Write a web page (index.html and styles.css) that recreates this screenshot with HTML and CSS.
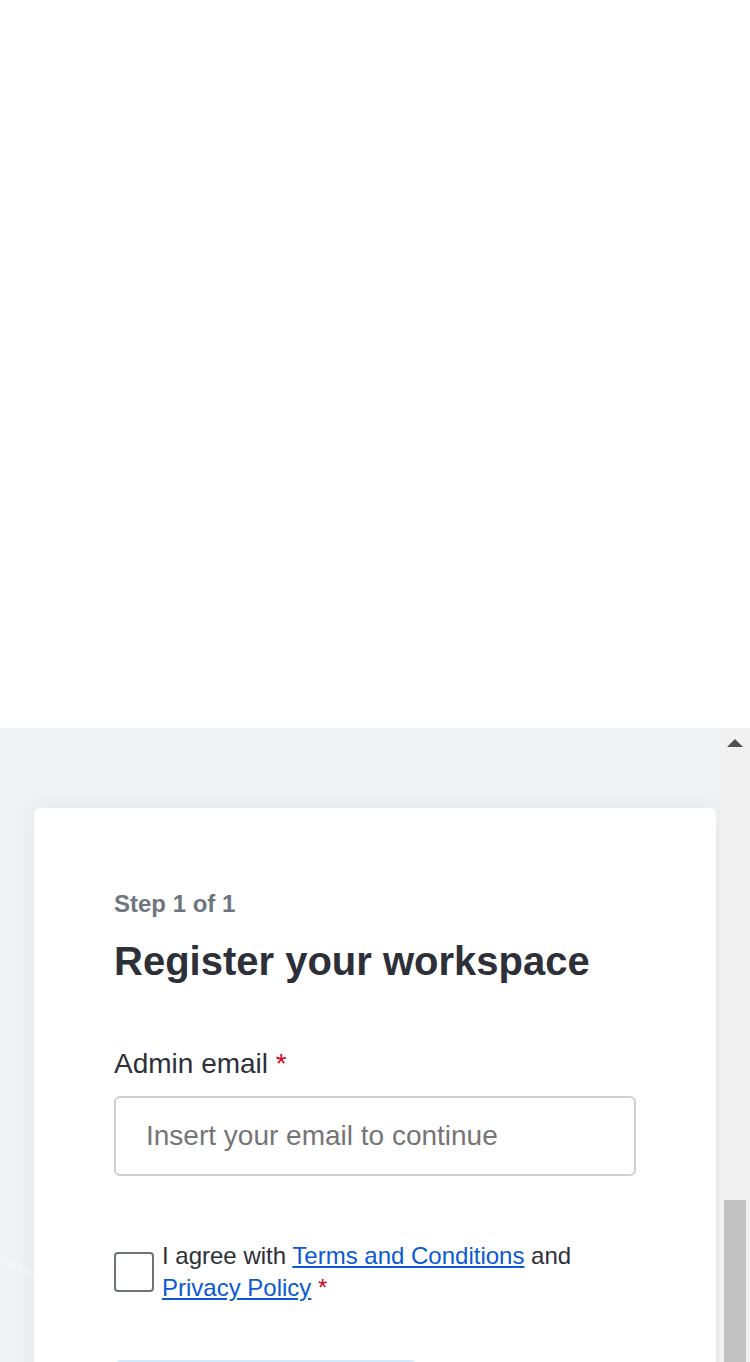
FILE: index.html
```html
<!DOCTYPE html>
<html lang="en">
<head>
<meta charset="utf-8">
<title>Register your workspace</title>
<link rel="stylesheet" href="styles.css">
</head>
<body>
<div class="blank"></div>
<div class="frame">
  <div class="deco"></div>
  <main class="card">
    <p class="step">Step 1 of 1</p>
    <h1 class="title">Register your workspace</h1>
    <form class="form">
      <label class="label" for="email">Admin email <span class="req">*</span></label>
      <input class="input" id="email" type="email" placeholder="Insert your email to continue">
      <div class="agree">
        <span class="checkbox"></span>
        <span class="agree-text">I agree with <a href="#">Terms and Conditions</a> and <a href="#">Privacy Policy</a> <span class="req">*</span></span>
      </div>
      <button class="submit" type="button" disabled>Continue</button>
    </form>
  </main>
  <div class="scrollbar">
    <span class="arrow"></span>
    <span class="thumb"></span>
  </div>
</div>
</body>
</html>
```
FILE: styles.css
```css
html, body {
  margin: 0;
  padding: 0;
  background: #ffffff;
}
body {
  font-family: "Liberation Sans", Arial, sans-serif;
  color: #2e3039;
}
.blank {
  height: 728px;
  background: #ffffff;
}
.frame {
  position: relative;
  height: 634px;
  overflow: hidden;
  background: #f1f2f4;
}
.deco {
  position: absolute;
  left: -60px;
  top: 500px;
  width: 140px;
  height: 8px;
  background: #f4f5f7;
  transform: rotate(24deg);
  transform-origin: left top;
}
.card {
  position: relative;
  margin: 80px 34px 0;
  padding: 80px;
  background: #ffffff;
  border-radius: 6px;
  box-shadow: 0 0 22px rgba(40, 44, 60, 0.07);
}
.step {
  margin: 0;
  font-size: 24px;
  line-height: 32px;
  font-weight: 700;
  color: #6f7580;
}
.title {
  margin: 16px 0 0;
  font-size: 40px;
  line-height: 50px;
  font-weight: 700;
  color: #2e3039;
}
.form {
  display: flex;
  flex-direction: column;
  align-items: flex-start;
  margin-top: 58px;
}
.label {
  font-size: 28px;
  line-height: 40px;
  color: #2e3039;
}
.req {
  color: #d9001b;
}
.input {
  box-sizing: border-box;
  width: 100%;
  height: 80px;
  margin-top: 12px;
  padding: 0 30px;
  border: 2px solid #cdd0d5;
  border-radius: 6px;
  font-family: "Liberation Sans", Arial, sans-serif;
  font-size: 28px;
  color: #2e3039;
  background: #ffffff;
}
.input::placeholder {
  color: #757575;
}
.agree {
  display: flex;
  align-items: center;
  gap: 8px;
  margin-top: 64px;
}
.checkbox {
  flex: none;
  box-sizing: border-box;
  width: 40px;
  height: 40px;
  border: 2px solid #6e737b;
  border-radius: 4px;
  background: #ffffff;
}
.agree-text {
  font-size: 24px;
  line-height: 32px;
  color: #2e3039;
}
.agree-text a {
  color: #0b5ad4;
  text-decoration: underline;
}
.submit {
  margin-top: 56px;
  width: 304px;
  height: 80px;
  border: none;
  border-radius: 8px;
  background: #d3eafd;
  color: #ffffff;
  font-family: "Liberation Sans", Arial, sans-serif;
  font-size: 28px;
  font-weight: 700;
}
.scrollbar {
  position: absolute;
  top: 0;
  right: 0;
  bottom: 0;
  width: 30px;
  background: #f1f1f1;
}
.arrow {
  position: absolute;
  top: 11px;
  left: 7px;
  width: 0;
  height: 0;
  border-left: 8px solid transparent;
  border-right: 8px solid transparent;
  border-bottom: 8px solid #505050;
}
.thumb {
  position: absolute;
  top: 472px;
  left: 4px;
  width: 22px;
  bottom: 0;
  background: #c1c1c1;
}
```
